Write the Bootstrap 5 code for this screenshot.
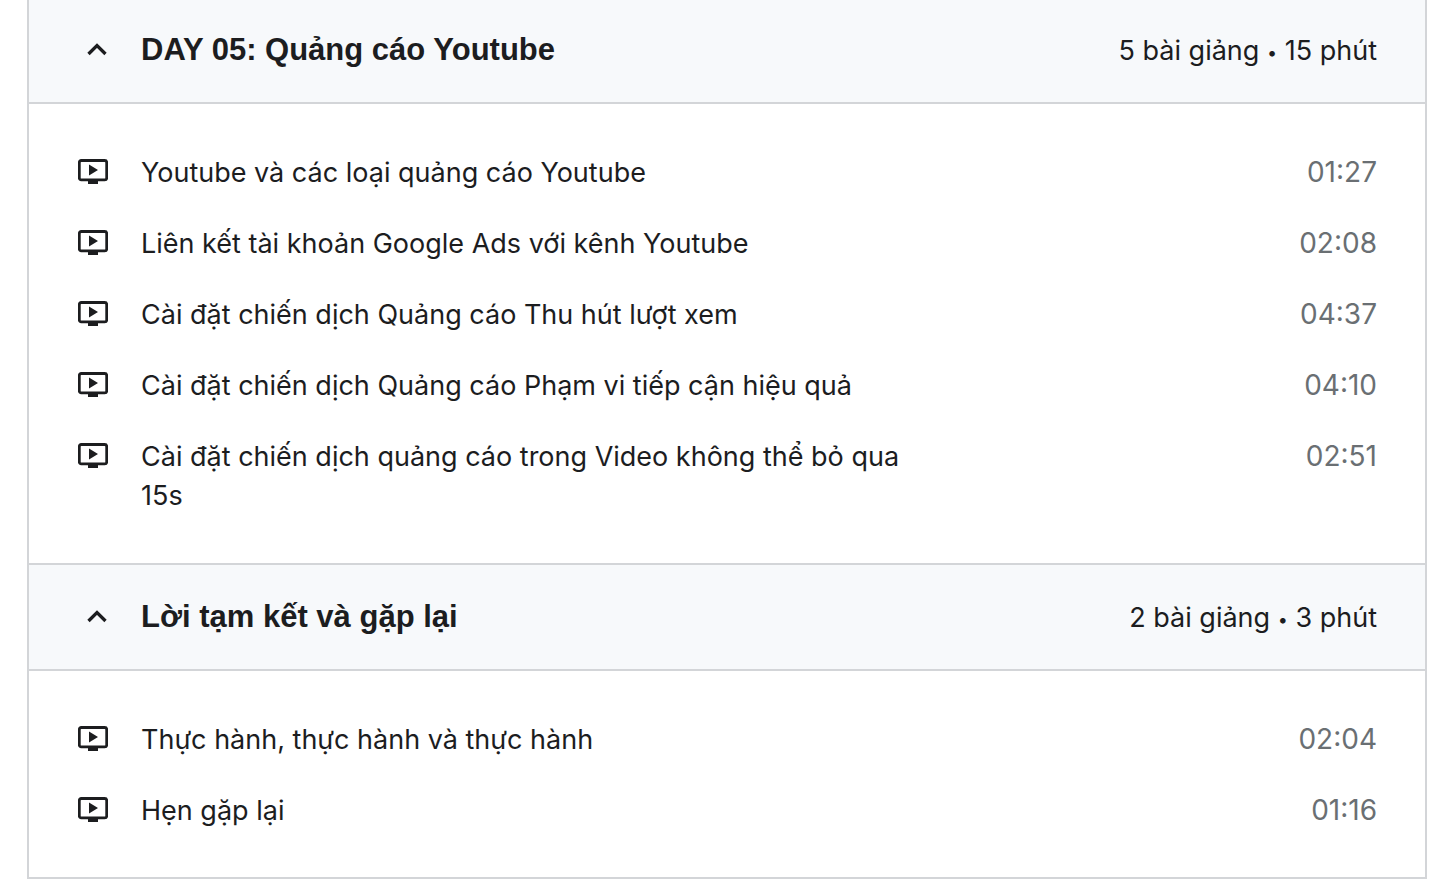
<!DOCTYPE html>
<html lang="vi">
<head>
<meta charset="utf-8">
<meta name="viewport" content="width=device-width, initial-scale=1">
<title>Nội dung khóa học</title>
<link href="https://cdn.jsdelivr.net/npm/bootstrap@5.3.0/dist/css/bootstrap.min.css" rel="stylesheet">
<style>
body{font-family:Inter,"Noto Sans",sans-serif;color:#1c1d1f;background:#fff}
.course{margin:0 21px 0 27px;border:2px solid #d3d5d8;border-top:0}
.section-head{background:#f7f9fb;border:0;border-bottom:2px solid #d3d5d8;padding:32px 48px 30px 49px;color:inherit;text-align:left}
.section-head.first{padding-top:30px}
.section-name{font:700 31px/40px "Liberation Sans",Arial,sans-serif}
.chev{width:38px;height:38px;margin-right:25px}
.meta{font-size:27px;line-height:42px}
.dot{font-size:18px;line-height:1}
.lessons{padding:49px 48px 47px 49px}
.lessons.more{padding-bottom:48px;border-bottom:2px solid #d3d5d8}
.lesson{padding:0 0 32px}
.lesson:last-child{padding-bottom:0}
.screen{width:30px;height:39px;margin-right:33px}
.lesson-title{font-size:27px;line-height:39px;max-width:800px}
.time{font-size:28px;line-height:39px;color:#6a6f73}
</style>
</head>
<body>
<svg class="d-none" xmlns="http://www.w3.org/2000/svg">
<symbol id="up" viewBox="0 0 38 38"><path d="M10.500 24 19 15.500 27.500 24" fill="none" stroke="currentColor" stroke-width="3.300"/></symbol>
<symbol id="video" viewBox="0 0 30 39"><rect x="1.300" y="7.500" width="27.400" height="19.400" rx="2" fill="none" stroke="currentColor" stroke-width="2.800"/><path d="M10 27h10v4H10zM11 11.500v11l9-5.500z" fill="currentColor"/></symbol>
</svg>
<main class="course">
<section>
<button class="section-head first d-flex w-100" type="button" data-bs-toggle="collapse" data-bs-target="#day5" aria-expanded="true" aria-controls="day5"><svg class="chev flex-shrink-0"><use href="#up"/></svg><span class="section-name">DAY 05: Quảng cáo Youtube</span><span class="meta ms-auto">5 bài giảng <span class="dot align-middle">•</span> 15 phút</span></button>
<div class="collapse show" id="day5"><ul class="lessons more list-unstyled mb-0">
<li class="lesson d-flex"><svg class="screen flex-shrink-0"><use href="#video"/></svg><span class="lesson-title">Youtube và các loại quảng cáo Youtube</span><span class="time ms-auto">01:27</span></li>
<li class="lesson d-flex"><svg class="screen flex-shrink-0"><use href="#video"/></svg><span class="lesson-title">Liên kết tài khoản Google Ads với kênh Youtube</span><span class="time ms-auto">02:08</span></li>
<li class="lesson d-flex"><svg class="screen flex-shrink-0"><use href="#video"/></svg><span class="lesson-title">Cài đặt chiến dịch Quảng cáo Thu hút lượt xem</span><span class="time ms-auto">04:37</span></li>
<li class="lesson d-flex"><svg class="screen flex-shrink-0"><use href="#video"/></svg><span class="lesson-title">Cài đặt chiến dịch Quảng cáo Phạm vi tiếp cận hiệu quả</span><span class="time ms-auto">04:10</span></li>
<li class="lesson d-flex"><svg class="screen flex-shrink-0"><use href="#video"/></svg><span class="lesson-title">Cài đặt chiến dịch quảng cáo trong Video không thể bỏ qua 15s</span><span class="time ms-auto">02:51</span></li>
</ul></div>
</section>
<section>
<button class="section-head d-flex w-100" type="button" data-bs-toggle="collapse" data-bs-target="#closing" aria-expanded="true" aria-controls="closing"><svg class="chev flex-shrink-0"><use href="#up"/></svg><span class="section-name">Lời tạm kết và gặp lại</span><span class="meta ms-auto">2 bài giảng <span class="dot align-middle">•</span> 3 phút</span></button>
<div class="collapse show" id="closing"><ul class="lessons list-unstyled mb-0">
<li class="lesson d-flex"><svg class="screen flex-shrink-0"><use href="#video"/></svg><span class="lesson-title">Thực hành, thực hành và thực hành</span><span class="time ms-auto">02:04</span></li>
<li class="lesson d-flex"><svg class="screen flex-shrink-0"><use href="#video"/></svg><span class="lesson-title">Hẹn gặp lại</span><span class="time ms-auto">01:16</span></li>
</ul></div>
</section>
</main>
<script src="https://cdn.jsdelivr.net/npm/bootstrap@5.3.0/dist/js/bootstrap.bundle.min.js"></script>
</body>
</html>
